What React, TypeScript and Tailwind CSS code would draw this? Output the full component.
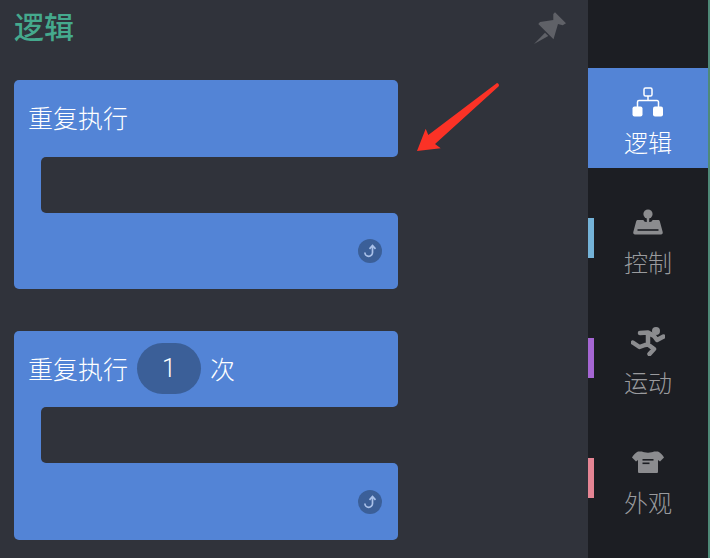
const FONT = "font-['Noto_Sans_CJK_SC','Liberation_Sans',sans-serif]";

const LoopIcon = () => (
  <svg width="24" height="24" viewBox="0 0 24 24">
    <circle cx="12" cy="12" r="12" fill="#3b5f98" />
    <path d="M14.500 7V13.500a3.800 3.800 0 0 1-7.600 0" fill="none" stroke="#a9c0e8" strokeWidth="1.700" />
    <path d="M11.500 9.800 14.500 6.600 17.500 9.800" fill="none" stroke="#a9c0e8" strokeWidth="1.700" />
  </svg>
);

// C-shaped loop block, the notch in the middle shows the panel colour
const LoopBlock = ({ children }: { children: React.ReactNode }) => (
  <div className="w-[384px]">
    <div className="h-[76.6px] bg-[#5384d6] rounded-t-[5px] rounded-br-[5px] pl-[14px] pb-[1px] flex items-center gap-[9px] text-white text-[25px] leading-none font-light">
      {children}
    </div>
    <div className="h-[56px] bg-[#5384d6] pl-[27px] flex">
      <div className="flex-1 bg-[#30333b] rounded-l-[5px]" />
    </div>
    <div className="h-[76.6px] bg-[#5384d6] rounded-b-[5px] rounded-tr-[5px] flex items-end justify-end pr-[16px] pb-[26px]">
      <LoopIcon />
    </div>
  </div>
);

const LogicIcon = () => (
  <svg width="32" height="30" viewBox="0 0 32 30">
    <rect x="12" y="1" width="8" height="8" rx="1.500" fill="none" stroke="white" strokeWidth="1.500" />
    <path d="M16 9v4.500M5.500 20v-5a1.500 1.500 0 0 1 1.500-1.500h18a1.500 1.500 0 0 1 1.500 1.500v5" fill="none" stroke="white" strokeWidth="1.500" />
    <rect x="0.500" y="19.500" width="10" height="10" rx="2" fill="white" />
    <rect x="21" y="19.500" width="10" height="10" rx="2" fill="white" />
  </svg>
);

const JoystickIcon = () => (
  <svg width="30" height="26" viewBox="0 0 30 26">
    <circle cx="15" cy="5" r="4.600" fill="#8b8c8f" />
    <rect x="13.800" y="8" width="2.400" height="6" fill="#8b8c8f" />
    <path d="M5 11h5.500c0 3 9 3 9 0H25c1 0 1.500.4 1.800 1.200L29.700 23c.3 1.300-.4 2.500-1.700 2.500H2c-1.300 0-2-1.200-1.700-2.500l2.900-10.800C3.500 11.400 4 11 5 11Z" fill="#8b8c8f" />
    <rect x="4.500" y="20.200" width="21" height="1.600" fill="#1c1e23" />
  </svg>
);

const RunnerIcon = () => (
  <svg width="34" height="29" viewBox="0 0 34 29">
    <circle cx="25" cy="4" r="4" fill="#8b8c8f" />
    <path
      d="M9 6 17 5.500 23 9 26 13 32.500 9.500M17 6 17 17.500 23 22 18.500 27M17 17.500 14 18 8.500 20 1.800 15.500"
      fill="none"
      stroke="#8b8c8f"
      strokeWidth="4.500"
      strokeLinecap="round"
      strokeLinejoin="round"
    />
  </svg>
);

const ShirtIcon = () => (
  <svg width="32" height="22" viewBox="0 0 32 22">
    <path d="M10 0.500C12 2 20 2 22 0.500L26 0.500C28 1.500 31 4 32 6.500L28 10.500 26 9V20.500C26 21.500 25.500 22 24.500 22H7.500C6.500 22 6 21.500 6 20.500V9L4 10.500 0 6.500C1 4 4 1.500 6 0.500Z" fill="#8b8c8f" />
    <rect x="10.500" y="8" width="11" height="1.600" fill="#1c1e23" />
    <rect x="10.500" y="11.500" width="7" height="1.600" fill="#1c1e23" />
  </svg>
);

const navItems = [
  { label: '控制', bar: 'bg-[#74b3d8]', iconClass: 'mt-[2px]', icon: <JoystickIcon /> },
  { label: '运动', bar: 'bg-[#a566d3]', iconClass: 'mt-0', icon: <RunnerIcon /> },
  { label: '外观', bar: 'bg-[#e58594]', iconClass: 'mt-[4px]', icon: <ShirtIcon /> },
];

export default function App() {
  return (
    <div className={`relative w-[710px] h-[558px] overflow-hidden flex bg-[#30333b] ${FONT}`}>
      <div className="w-[588px] pl-[14px]">
        <div className="h-[80px] flex items-start justify-between pr-[21px]">
          <span className="mt-[7px] text-[30px] leading-[36px] font-medium text-[#45a98d]">逻辑</span>
          <svg className="mt-[12px]" width="34" height="33" viewBox="0 0 34 33">
            <path d="M22 0.300 33 11.300 29.700 13.300 25 12 20.500 27.300 5.300 12 7 10 20.300 8 20.300 2Z" fill="#5f6167" />
            <path d="M12 20.700 15.300 24 1 32Z" fill="#5f6167" />
          </svg>
        </div>
        <div className="flex flex-col gap-[41.4px]">
          <LoopBlock>重复执行</LoopBlock>
          <LoopBlock>
            <span>重复执行</span>
            <span className="w-[64px] h-[51px] rounded-[26px] bg-[#3b5f98] flex items-center justify-center font-['Roboto',sans-serif] text-[25px]">1</span>
            <span>次</span>
          </LoopBlock>
        </div>
      </div>

      <div className="w-[120px] bg-[#1c1e23] pt-[68px]">
        <div className="h-[100px] bg-[#5384d6] flex flex-col items-center pt-[19px] text-white text-[24px] leading-[30px] font-light">
          <LogicIcon />
          <span className="mt-[10px]">逻辑</span>
        </div>
        {navItems.map((item) => (
          <div key={item.label} className="relative h-[100px] mt-[20px] flex flex-col items-center pt-[19px] text-[#9a9b9e] text-[24px] leading-[30px] font-light">
            <span className={`absolute left-0 top-[30px] w-[6px] h-[40px] ${item.bar}`} />
            <div className="h-[38px] mb-[2px]">
              <div className={item.iconClass}>{item.icon}</div>
            </div>
            <span>{item.label}</span>
          </div>
        ))}
      </div>
      <div className="w-[2px] bg-[#4f8a78]" />

      {/* annotation arrow */}
      <svg className="absolute left-[410px] top-[78px]" width="96" height="80" viewBox="0 0 96 80">
        <path d="M87 5C88.700 5.500 89.700 7.200 88.500 8.500L25 66 30.700 70.300 7 73 15.700 50.700 18.300 57Z" fill="#fb3226" />
      </svg>
    </div>
  );
}
